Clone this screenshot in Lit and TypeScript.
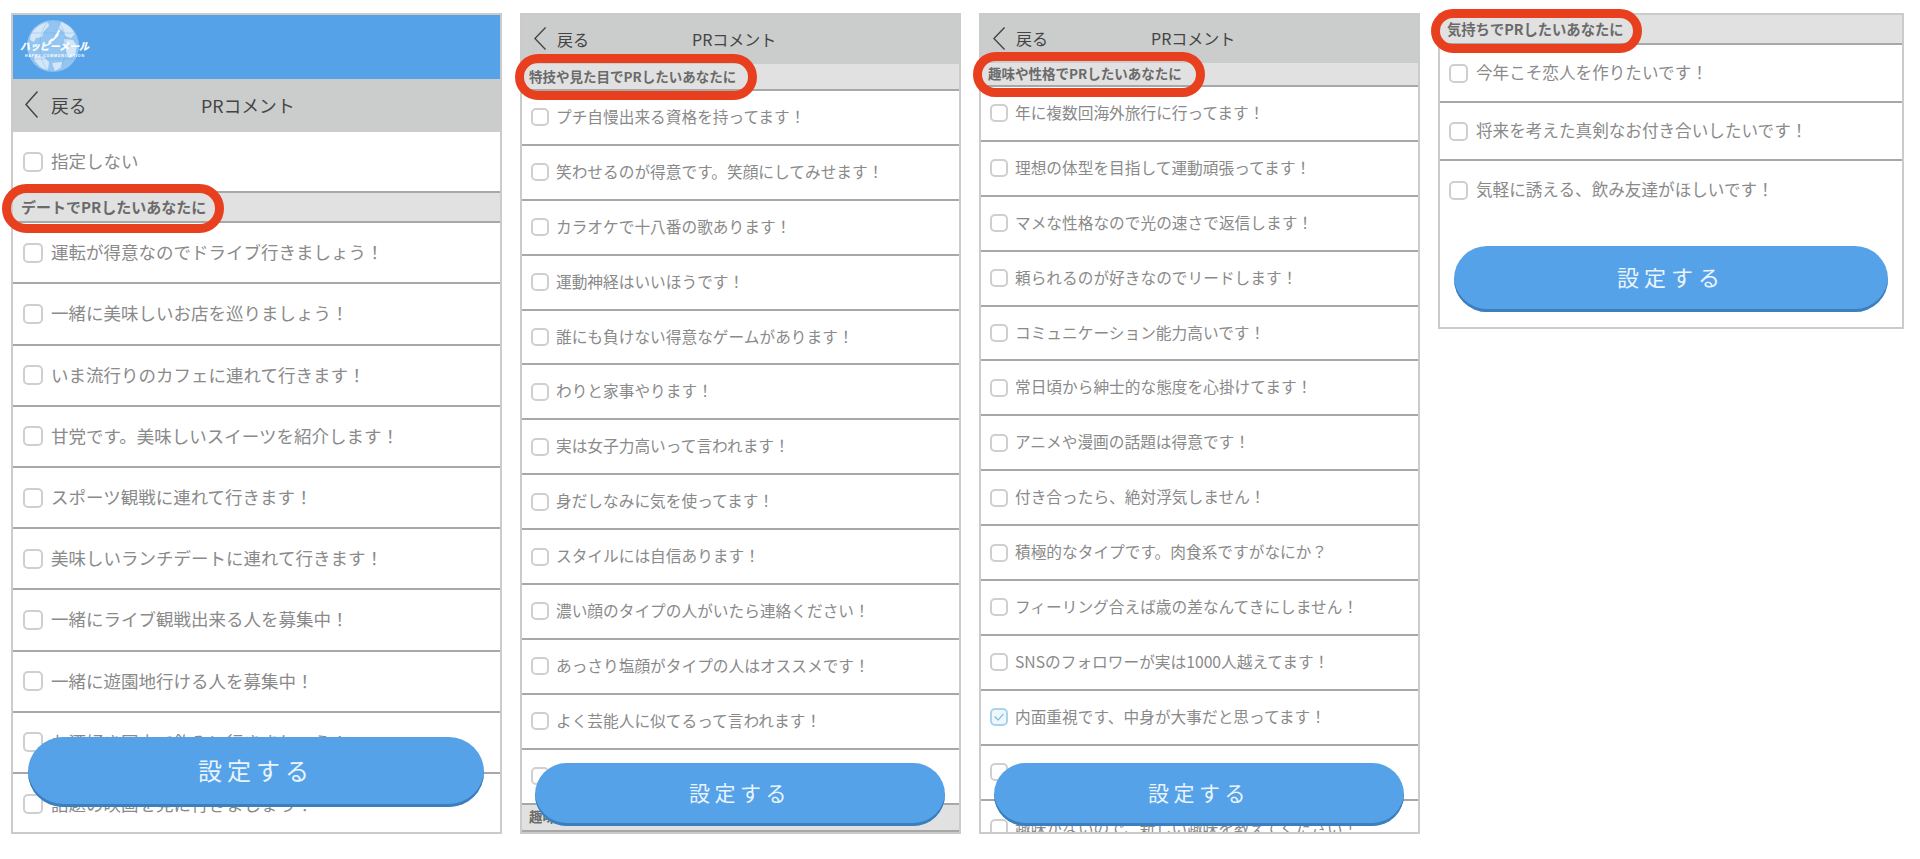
// app.ts
import { LitElement, html, css, svg } from "lit";
import { customElement } from "lit/decorators.js";

type Row = { text: string; checked?: boolean };
type Item = { section: string } | Row;

const DATE_SECTION = "デートでPRしたいあなたに";
const SKILL_SECTION = "特技や見た目でPRしたいあなたに";
const HOBBY_SECTION = "趣味や性格でPRしたいあなたに";
const FEEL_SECTION = "気持ちでPRしたいあなたに";

const rows = (...texts: string[]): Item[] => texts.map((text) => ({ text }));

const PANELS: { id: string; logo?: boolean; nav: boolean; items: Item[] }[] = [
  {
    id: "p1",
    logo: true,
    nav: true,
    items: [
      { text: "指定しない" },
      { section: DATE_SECTION },
      ...rows(
        "運転が得意なのでドライブ行きましょう！",
        "一緒に美味しいお店を巡りましょう！",
        "いま流行りのカフェに連れて行きます！",
        "甘党です。美味しいスイーツを紹介します！",
        "スポーツ観戦に連れて行きます！",
        "美味しいランチデートに連れて行きます！",
        "一緒にライブ観戦出来る人を募集中！",
        "一緒に遊園地行ける人を募集中！",
        "お酒好き同士で飲みに行きましょう！",
        "話題の映画を見に行きましょう！"
      ),
    ],
  },
  {
    id: "p2",
    nav: true,
    items: [
      { section: SKILL_SECTION },
      ...rows(
        "プチ自慢出来る資格を持ってます！",
        "笑わせるのが得意です。笑顔にしてみせます！",
        "カラオケで十八番の歌あります！",
        "運動神経はいいほうです！",
        "誰にも負けない得意なゲームがあります！",
        "わりと家事やります！",
        "実は女子力高いって言われます！",
        "身だしなみに気を使ってます！",
        "スタイルには自信あります！",
        "濃い顔のタイプの人がいたら連絡ください！",
        "あっさり塩顔がタイプの人はオススメです！",
        "よく芸能人に似てるって言われます！",
        ""
      ),
      { section: HOBBY_SECTION },
    ],
  },
  {
    id: "p3",
    nav: true,
    items: [
      { section: HOBBY_SECTION },
      ...rows(
        "年に複数回海外旅行に行ってます！",
        "理想の体型を目指して運動頑張ってます！",
        "マメな性格なので光の速さで返信します！",
        "頼られるのが好きなのでリードします！",
        "コミュニケーション能力高いです！",
        "常日頃から紳士的な態度を心掛けてます！",
        "アニメや漫画の話題は得意です！",
        "付き合ったら、絶対浮気しません！",
        "積極的なタイプです。肉食系ですがなにか？",
        "フィーリング合えば歳の差なんてきにしません！",
        "SNSのフォロワーが実は1000人越えてます！"
      ),
      { text: "内面重視です、中身が大事だと思ってます！", checked: true },
      ...rows("", "趣味がないので、新しい趣味を教えてください！"),
    ],
  },
  {
    id: "p4",
    nav: false,
    items: [
      { section: FEEL_SECTION },
      ...rows(
        "今年こそ恋人を作りたいです！",
        "将来を考えた真剣なお付き合いしたいです！",
        "気軽に誘える、飲み友達がほしいです！"
      ),
    ],
  },
];

@customElement("app-root")
export class AppRoot extends LitElement {
  static styles = css`
    :host {
      display: block;
      font-family: "Noto Sans CJK JP", "Noto Sans", sans-serif;
      background: #fff;
    }
    .stage {
      display: flex;
      align-items: flex-start;
      gap: 18px;
      padding: 13px 16px 0 11px;
      height: 859px;
      box-sizing: border-box;
    }
    .panel {
      position: relative;
      box-sizing: border-box;
      flex: none;
      border: 2px solid #cbcbcb;
      background: #fff;
    }
    .p1 {
      width: 491px;
      height: 821px;
      --row-h: 61.2px;
      --fs: 17.5px;
      --cb: 20px;
      --row-pad: 10px;
      --cb-gap: 8px;
      --sec-h: 30px;
      --sec-fs: 15px;
      --sec-pad: 8px;
      --nav-h: 53px;
      --nav-fs: 17.8px;
      --back-w: 188px;
      --chev-h: 27px;
      --chev-w: 13px;
      --chev-gap: 13px;
    }
    .p2,
    .p3 {
      width: 441px;
      height: 821px;
      --row-h: 54.9px;
      --fs: 15.7px;
      --cb: 18px;
      --row-pad: 9px;
      --cb-gap: 7px;
      --sec-h: 27px;
      --sec-fs: 13.5px;
      --sec-pad: 7px;
      --nav-h: 49px;
      --nav-fs: 16px;
      --back-w: 170px;
      --chev-h: 23px;
      --chev-w: 12px;
      --chev-gap: 11px;
    }
    .p3 {
      --sec-h: 24px;
      --nav-h: 48px;
    }
    .p4 {
      width: 466px;
      height: 316px;
      --row-h: 58px;
      --fs: 16.6px;
      --cb: 19px;
      --row-pad: 9px;
      --cb-gap: 8px;
      --sec-h: 30px;
      --sec-fs: 14.3px;
      --sec-pad: 7px;
    }
    .clip {
      height: 100%;
      overflow: hidden;
    }
    .logo-bar {
      height: 64px;
      background: #56a2e8;
      padding-left: 6px;
    }
    .logo-bar svg {
      display: block;
    }
    .logo-main {
      font-family: "Noto Sans CJK JP", sans-serif;
      font-size: 10px;
      font-weight: 700;
      font-style: italic;
      fill: #fff;
      stroke: #fff;
      stroke-width: 0.3px;
    }
    .logo-sub {
      font-family: "Liberation Sans", sans-serif;
      font-size: 3.6px;
      font-weight: 700;
      fill: #fff;
    }
    .nav {
      display: flex;
      align-items: center;
      box-sizing: border-box;
      height: var(--nav-h);
      background: #cbcccc;
      color: #444;
      font-size: var(--nav-fs);
      padding: 0 0 2px 12px;
    }
    .back {
      display: flex;
      align-items: center;
      gap: var(--chev-gap);
      box-sizing: border-box;
      width: calc(var(--back-w) - 12px);
    }
    .chev {
      display: block;
      width: var(--chev-w);
      height: var(--chev-h);
    }
    .section {
      display: flex;
      align-items: center;
      box-sizing: border-box;
      height: var(--sec-h);
      padding: 0 0 2px var(--sec-pad);
      background: #e1e1e1;
      border-bottom: 2px solid #a8a8a8;
      font-size: var(--sec-fs);
      font-weight: 700;
      color: #6a6a6a;
    }
    .row {
      display: flex;
      align-items: center;
      gap: var(--cb-gap);
      box-sizing: border-box;
      height: var(--row-h);
      padding-left: var(--row-pad);
      border-bottom: 2px solid #a8a8a8;
      color: #8a8a8a;
      font-size: var(--fs);
      white-space: nowrap;
    }
    .row.last {
      border-bottom: none;
    }
    .label {
      margin-bottom: 2px;
    }
    .cb {
      flex: none;
      box-sizing: border-box;
      width: var(--cb);
      height: var(--cb);
      border: 2px solid #cfcfcf;
      border-radius: 5px;
      background: #fff;
    }
    .cb.on {
      border-color: #a9d4ec;
      background: #eef7fc;
    }
    .cb svg {
      display: block;
      width: 100%;
      height: 100%;
    }
    .ring {
      position: absolute;
      box-sizing: border-box;
      border: 9px solid #e8401f;
      border-radius: 999px;
      pointer-events: none;
    }
    .p1 .ring {
      left: -11px;
      top: 169px;
      width: 222px;
      height: 49px;
    }
    .p2 .ring {
      left: -7px;
      top: 39px;
      width: 242px;
      height: 46px;
    }
    .p3 .ring {
      left: -8px;
      top: 37px;
      width: 232px;
      height: 45px;
    }
    .p4 .ring {
      left: -9px;
      top: -6px;
      width: 211px;
      height: 44px;
    }
    .submit {
      position: absolute;
      display: flex;
      align-items: center;
      justify-content: center;
      box-sizing: border-box;
      padding-bottom: 6px;
      border-radius: 999px;
      background: #56a2e8;
      box-shadow: inset 0 -3px 0 #3c7fbd;
      color: #e9f4fd;
    }
    .p1 .submit {
      left: 15px;
      right: 16px;
      bottom: 25px;
      height: 70px;
      font-size: 24px;
      letter-spacing: 5px;
    }
    .p2 .submit,
    .p3 .submit {
      left: 13px;
      right: 14px;
      bottom: 6px;
      height: 63px;
      font-size: 21px;
      letter-spacing: 4.5px;
    }
    .p4 .submit {
      left: 14px;
      right: 14px;
      bottom: 15px;
      height: 66px;
      font-size: 22px;
      letter-spacing: 5px;
    }
  `;

  private logo() {
    return html`<svg width="74" height="64" viewBox="0 0 74 64">
      <circle cx="34" cy="31" r="26" fill="#93c5f0" />
      ${svg`
        <g fill="#d3e7f9">
          <path d="M14 16c4-5 10-8 15-9l1 4-5 5-2 6-6 1-2 4-4-2c0-3 1-6 3-9z" />
          <path d="M42 7c6 2 11 6 14 12l-4 4-6-2-2-5-4-3z" />
          <path d="M45 24l9 1 4 6-2 9-6 3-3-6z" />
          <path d="M16 40l9 2 5 5-1 8c-6-1-11-5-14-11z" />
          <path d="M33 48l10-1-1 6-6 3z" />
        </g>
        <path d="M29 27l3-3 3-1 2-4 3-5 1 2-2 5-3 3-2 2-3 1z" fill="#fff" />
        <g fill="none" stroke="#56a2e8" stroke-width=".4" opacity=".7">
          <ellipse cx="34" cy="31" rx="13" ry="26" />
          <path d="M8 31h52M12 18h44M12 44h44" />
        </g>
      `}
      <text class="logo-main" x="1" y="35" textLength="69" lengthAdjust="spacingAndGlyphs">ハッピーメール</text>
      <text class="logo-sub" x="6" y="42" textLength="59" lengthAdjust="spacing">HAPPY COMMUNICATION</text>
    </svg>`;
  }

  private checkbox(checked?: boolean) {
    if (!checked) return html`<span class="cb"></span>`;
    return html`<span class="cb on">
      <svg viewBox="0 0 16 16"><path d="M3 7.5l4 4 6-7" fill="none" stroke="#7fc0e4" stroke-width="1.5" /></svg>
    </span>`;
  }

  private item(item: Item, last: boolean) {
    if ("section" in item) {
      return html`<div class="section">${item.section}</div>`;
    }
    return html`<div class="row ${last ? "last" : ""}">
      ${this.checkbox(item.checked)}<span class="label">${item.text}</span>
    </div>`;
  }

  render() {
    return html`
      <div class="stage">
        ${PANELS.map(
          (p) => html`
            <div class="panel ${p.id}">
              <div class="clip">
                ${p.logo ? html`<div class="logo-bar">${this.logo()}</div>` : ""}
                ${p.nav
                  ? html`<div class="nav">
                      <div class="back">
                        <svg class="chev" viewBox="0 0 13 27" preserveAspectRatio="none">
                          <path d="M12.5 .5L1 13.5l11.5 13" fill="none" stroke="#444" stroke-width="1.5" />
                        </svg>
                        <span>戻る</span>
                      </div>
                      <span>PRコメント</span>
                    </div>`
                  : ""}
                ${p.items.map((it, i) => this.item(it, i === p.items.length - 1))}
              </div>
              <div class="ring"></div>
              <div class="submit">設定する</div>
            </div>
          `
        )}
      </div>
    `;
  }
}

declare global {
  interface HTMLElementTagNameMap {
    "app-root": AppRoot;
  }
}
